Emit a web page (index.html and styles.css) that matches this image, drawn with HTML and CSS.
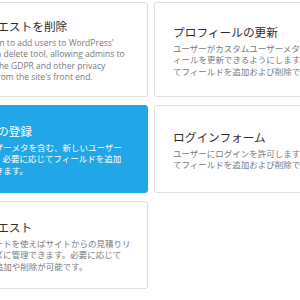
FILE: index.html
```html
<!DOCTYPE html>
<html lang="ja">
<head>
    <meta charset="UTF-8">
    <meta name="viewport" content="width=device-width, initial-scale=1.0">
    <title>フォームテンプレート</title>
    <link rel="stylesheet" href="styles.css">
</head>
<body>
    <div class="templates">
        <div class="card">
            <h3 class="card-title">個人情報リクエストを削除</h3>
            <p class="card-text">This adds an option to add users to WordPress'<br>core personal data delete tool, allowing admins to<br>fully comply with the GDPR and other privacy<br>regulations right from the site's front end.</p>
        </div>
        <div class="card">
            <h3 class="card-title">プロフィールの更新</h3>
            <p class="card-text">ユーザーがカスタムユーザーメタを含むプロフ<br>ィールを更新できるようにします。必要に応じ<br>てフィールドを追加および削除できます。</p>
        </div>
        <div class="card active">
            <h3 class="card-title">新規ユーザーの登録</h3>
            <p class="card-text">各種カスタムユーザーメタを含む、新しいユーザー<br>登録フォームです。必要に応じてフィールドを追加<br>削除することもできます。</p>
        </div>
        <div class="card">
            <h3 class="card-title">ログインフォーム</h3>
            <p class="card-text">ユーザーにログインを許可します。必要に応じ<br>てフィールドを追加および削除できます。</p>
        </div>
        <div class="card">
            <h3 class="card-title">見積もりリクエスト</h3>
            <p class="card-text">フォームテンプレートを使えばサイトからの見積りリ<br>クエストをスムーズに管理できます。必要に応じて<br>入力フィールドの追加や削除が可能です。</p>
        </div>
    </div>
</body>
</html>
```

FILE: styles.css
```css
body {
    font-family: "Open Sans", "Noto Sans CJK JP", sans-serif;
    background-color: #fff;
    margin: 0;
    padding: 0;
    overflow: hidden;
}

.templates {
    display: grid;
    grid-template-columns: 240px 240px;
    column-gap: 6px;
    row-gap: 8px;
    margin: 2px 0 0 -92px;
}

.card {
    box-sizing: border-box;
    min-height: 88px;
    display: flex;
    flex-direction: column;
    justify-content: center;
    padding: 15px 18px 13px;
    border: 1px solid #dedede;
    border-radius: 3px;
    background-color: #fff;
}

.card-title {
    margin: 0 0 3px;
    font-size: 11.7px;
    line-height: 16px;
    font-weight: normal;
    color: #2e2e2e;
    white-space: nowrap;
}

.card-text {
    margin: 0;
    font-size: 8.5px;
    line-height: 11.4px;
    color: #7a7a7a;
    white-space: nowrap;
}

.card.active {
    background-color: #21a6e8;
    border-color: #21a6e8;
}

.card.active .card-title,
.card.active .card-text {
    color: #fff;
}
```
